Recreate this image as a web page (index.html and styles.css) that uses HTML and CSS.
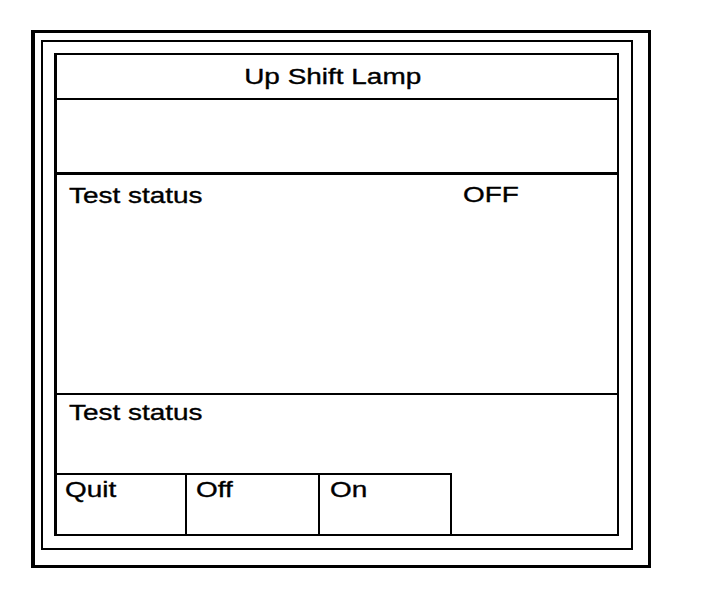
FILE: index.html
```html
<!DOCTYPE html>
<html>
<head>
<meta charset="utf-8">
<link rel="stylesheet" href="styles.css">
<title>Up Shift Lamp</title>
</head>
<body>
<div class="outer">
  <div class="middle">
    <div class="panel">
      <div class="header"><span class="txt center">Up Shift Lamp</span></div>
      <div class="blank"></div>
      <div class="main">
        <span class="txt">Test status</span>
        <span class="txt">OFF</span>
      </div>
      <div class="status"><span class="txt">Test status</span></div>
      <div class="buttons">
        <div class="btn btn-quit"><span class="txt">Quit</span></div>
        <div class="btn btn-off"><span class="txt">Off</span></div>
        <div class="btn btn-on"><span class="txt">On</span></div>
      </div>
    </div>
  </div>
</div>
</body>
</html>
```

FILE: styles.css
```css
html, body {
  margin: 0;
  padding: 0;
  background: #ffffff;
}

body {
  font-family: "Liberation Sans", Arial, sans-serif;
  font-size: 22px;
  line-height: 25px;
  color: #000000;
}

.outer {
  box-sizing: border-box;
  margin: 30px 0 0 31px;
  width: 620px;
  height: 538px;
  border: 3px solid #000;
  border-left-width: 4px;
  padding: 7px 0 0 6px;
}

.middle {
  box-sizing: border-box;
  width: 592px;
  height: 510px;
  border: 2px solid #000;
  padding: 11px 0 0 11px;
}

.panel {
  box-sizing: border-box;
  width: 565px;
  height: 483px;
  border: 2px solid #000;
  border-left-width: 3px;
  display: flex;
  flex-direction: column;
}

.txt {
  display: inline-block;
  transform: scaleX(1.27);
  transform-origin: left center;
  white-space: nowrap;
  -webkit-text-stroke: 0.35px #000;
}

.txt.center {
  transform-origin: center center;
}

.header {
  box-sizing: border-box;
  height: 45px;
  border-bottom: 2px solid #000;
  padding: 9px 9px 0 0;
  text-align: center;
}

.blank {
  box-sizing: border-box;
  height: 75px;
  border-bottom: 3px solid #000;
}

.main {
  box-sizing: border-box;
  height: 220px;
  border-bottom: 2px solid #000;
  padding: 8px 0 0 12px;
  display: grid;
  grid-template-columns: 394px auto;
  align-content: start;
}

.main .txt:last-child {
  margin-top: -1px;
}

.status {
  box-sizing: border-box;
  height: 78px;
  padding: 5px 0 0 12px;
}

.buttons {
  display: flex;
  height: 61px;
}

.btn {
  box-sizing: border-box;
  height: 61px;
  border-top: 2px solid #000;
  border-right: 2px solid #000;
  padding: 2px 0 0 9px;
}

.btn-quit {
  width: 130px;
  padding-left: 8px;
}

.btn-off {
  width: 133px;
}

.btn-on {
  width: 132px;
  padding-left: 10px;
}
```
